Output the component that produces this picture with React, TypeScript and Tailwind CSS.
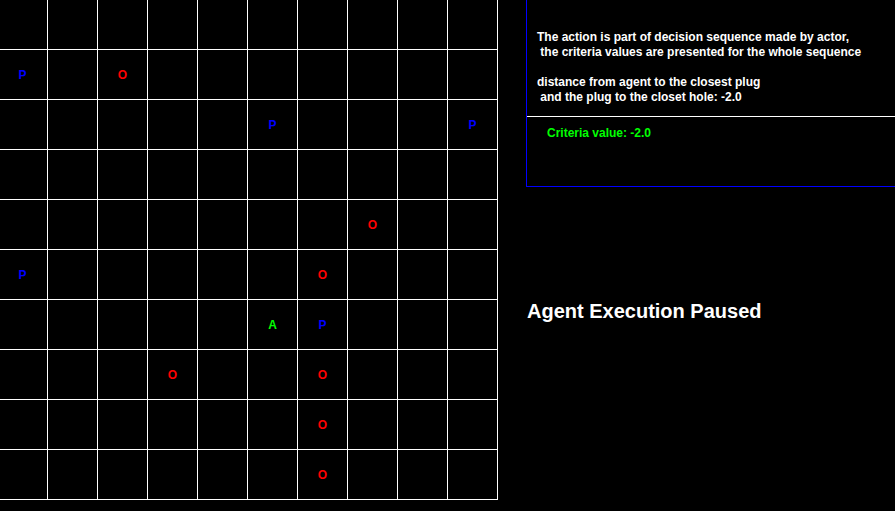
const cells: Record<string, 'P' | 'O' | 'A'> = {
  '1-0': 'P',
  '1-2': 'O',
  '2-5': 'P',
  '2-9': 'P',
  '4-7': 'O',
  '5-0': 'P',
  '5-6': 'O',
  '6-5': 'A',
  '6-6': 'P',
  '7-3': 'O',
  '7-6': 'O',
  '8-6': 'O',
  '9-6': 'O',
}

const colors = {
  P: 'text-[#0000ff]',
  O: 'text-[#ff0000]',
  A: 'text-[#00ff00]',
}

function Board() {
  const rows = Array.from({ length: 10 }, (_, r) => r)
  return (
    <div className="grid grid-cols-[repeat(10,50px)] grid-rows-[repeat(10,50px)] content-start self-start -ml-[2px] shrink-0">
      {rows.flatMap((r) =>
        rows.map((c) => {
          const v = cells[`${r}-${c}`]
          return (
            <div
              key={`${r}-${c}`}
              className="w-[50px] h-[50px] border-r border-b border-white flex items-center justify-center text-[12px] font-bold"
            >
              {v && <span className={colors[v]}>{v}</span>}
            </div>
          )
        })
      )}
    </div>
  )
}

export default function App() {
  return (
    <div
      className="w-[895px] h-[511px] bg-black overflow-hidden flex items-start"
      style={{ fontFamily: '"Liberation Sans", Arial, sans-serif' }}
    >
      <Board />
      <div className="ml-[28px] flex-1 flex flex-col">
        <div className="h-[187px] border-l border-b border-[#0000ff] flex flex-col">
          <div className="h-[117px] border-b border-white pl-[10px] pt-[30px] text-white text-[12px] font-bold leading-[15px] whitespace-pre">
            <div>The action is part of decision sequence made by actor,</div>
            <div> the criteria values are presented for the whole sequence</div>
            <div>&nbsp;</div>
            <div>distance from agent to the closest plug</div>
            <div> and the plug to the closet hole: -2.0</div>
          </div>
          <div className="pl-[20px] pt-[9px] text-[#00ff00] text-[12px] font-bold leading-[15px]">
            Criteria value: -2.0
          </div>
        </div>
        <div className="mt-[112px] pl-px text-white text-[20px] font-bold leading-[24px]">
          Agent Execution Paused
        </div>
      </div>
    </div>
  )
}
